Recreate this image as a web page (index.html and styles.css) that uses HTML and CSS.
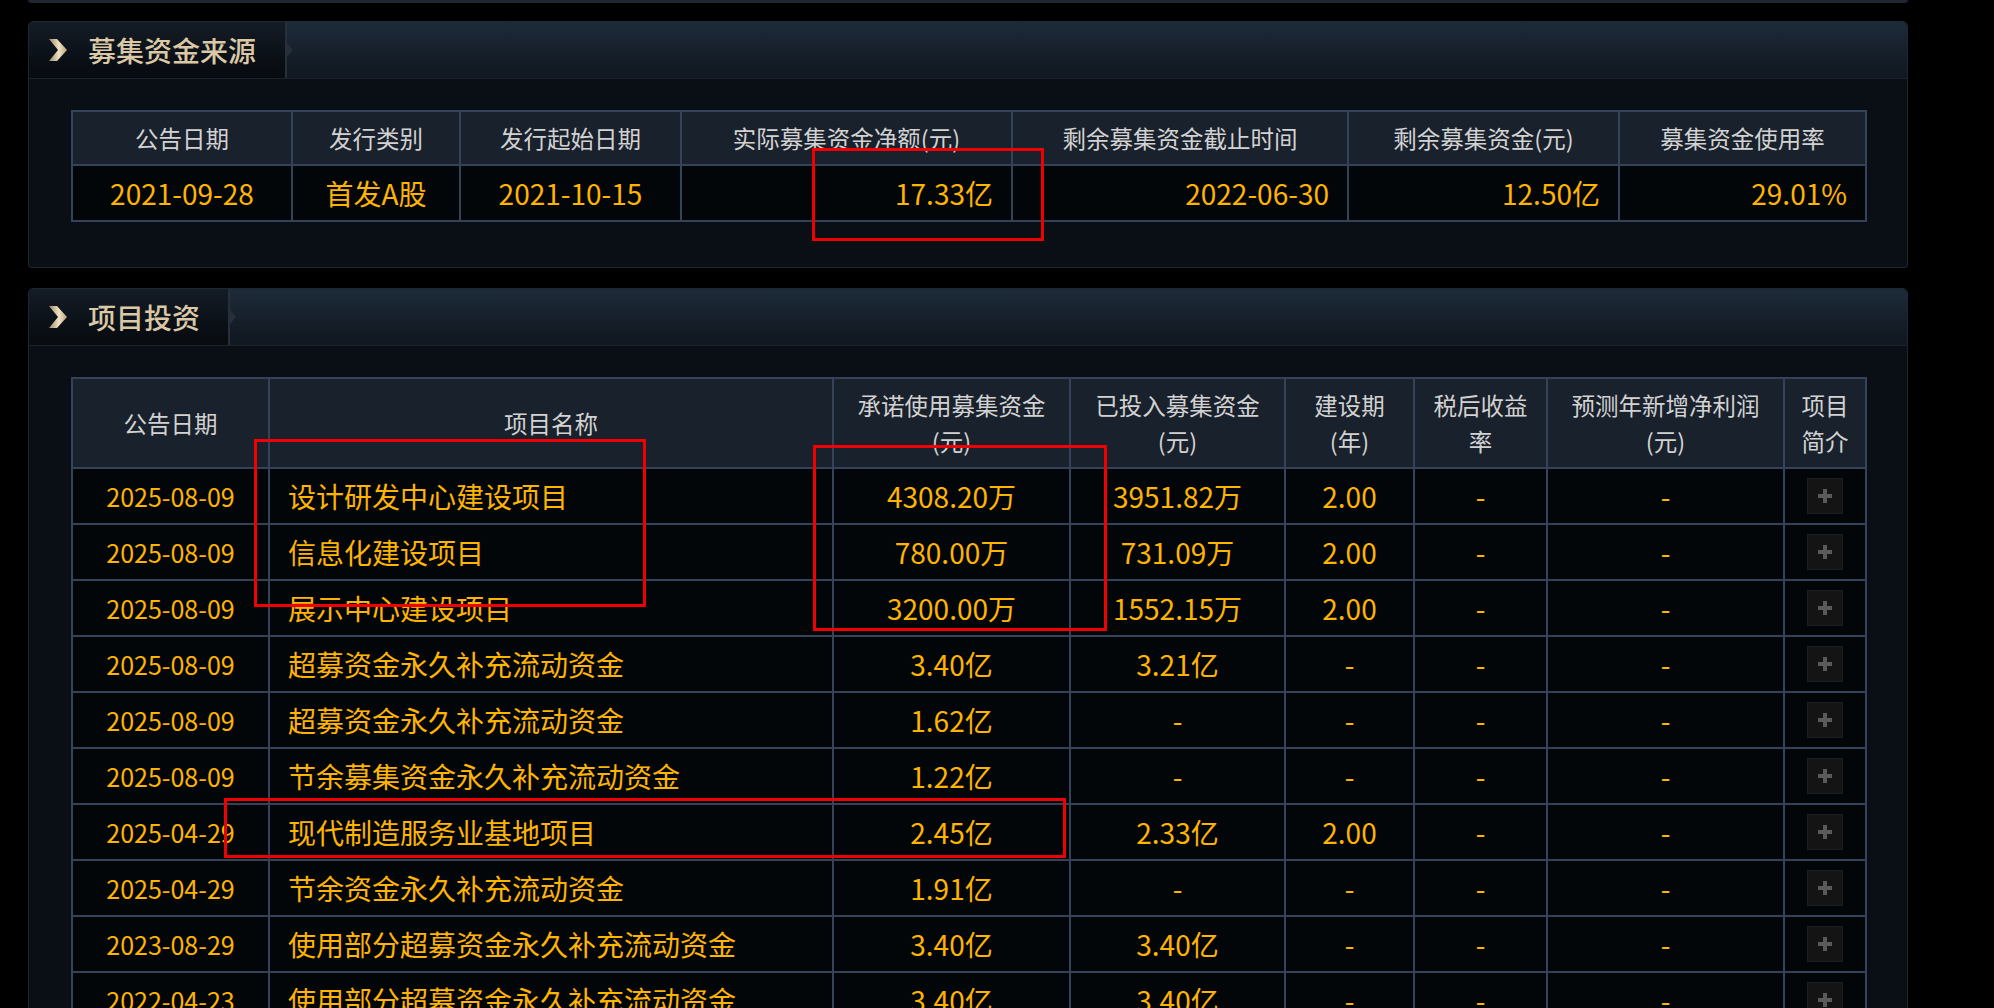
FILE: index.html
```html
<!DOCTYPE html>
<html lang="zh-CN">
<head>
<meta charset="utf-8">
<title>募集资金</title>
<link rel="stylesheet" href="styles.css">
</head>
<body>
<div class="page">
  <div class="prev-edge"></div>

  <section class="panel">
    <header class="panel-head">
      <div class="tab tab-wide">
        <svg class="chev" width="20" height="22" viewBox="0 0 20 22"><defs><linearGradient id="cg1" x1="0" y1="0" x2="1" y2="0"><stop offset="0" stop-color="#9a8766"/><stop offset="0.55" stop-color="#f0e2c4"/><stop offset="1" stop-color="#b8a47f"/></linearGradient></defs><polygon points="1,0 9,0 19,11 9,22 1,22 10,11" fill="url(#cg1)"/></svg>
        <h2 class="title">募集资金来源</h2>
      </div>
    </header>
    <div class="panel-body">
      <table class="grid grid-a">
        <colgroup><col class="a1"><col class="a2"><col class="a3"><col class="a4"><col class="a5"><col class="a6"><col class="a7"></colgroup>
        <thead>
          <tr><th>公告日期</th><th>发行类别</th><th>发行起始日期</th><th>实际募集资金净额(元)</th><th>剩余募集资金截止时间</th><th>剩余募集资金(元)</th><th>募集资金使用率</th></tr>
        </thead>
        <tbody>
          <tr>
            <td class="num c">2021-09-28</td>
            <td class="c">首发A股</td>
            <td class="num c">2021-10-15</td>
            <td class="num r">17.33<span class="u">亿</span></td>
            <td class="num r">2022-06-30</td>
            <td class="num r">12.50<span class="u">亿</span></td>
            <td class="num r">29.01%</td>
          </tr>
        </tbody>
      </table>
    </div>
  </section>

  <section class="panel">
    <header class="panel-head">
      <div class="tab tab-narrow">
        <svg class="chev" width="20" height="22" viewBox="0 0 20 22"><defs><linearGradient id="cg2" x1="0" y1="0" x2="1" y2="0"><stop offset="0" stop-color="#9a8766"/><stop offset="0.55" stop-color="#f0e2c4"/><stop offset="1" stop-color="#b8a47f"/></linearGradient></defs><polygon points="1,0 9,0 19,11 9,22 1,22 10,11" fill="url(#cg2)"/></svg>
        <h2 class="title">项目投资</h2>
      </div>
    </header>
    <div class="panel-body">
      <table class="grid grid-b">
        <colgroup><col class="b1"><col class="b2"><col class="b3"><col class="b4"><col class="b5"><col class="b6"><col class="b7"><col class="b8"></colgroup>
        <thead>
          <tr><th>公告日期</th><th>项目名称</th><th>承诺使用募集资金<br>(元)</th><th>已投入募集资金<br>(元)</th><th>建设期<br>(年)</th><th>税后收益<br>率</th><th>预测年新增净利润<br>(元)</th><th>项目<br>简介</th></tr>
        </thead>
        <tbody>
          <tr><td class="num date c">2025-08-09</td><td class="name">设计研发中心建设项目</td><td class="num c">4308.20<span class="u">万</span></td><td class="num c">3951.82<span class="u">万</span></td><td class="num c">2.00</td><td class="num c">-</td><td class="num c">-</td><td class="c"><span class="plus"><svg width="16" height="16" viewBox="0 0 16 16"><path d="M8 1v14M1 8h14" stroke="#5a5a5a" stroke-width="4"/></svg></span></td></tr>
          <tr><td class="num date c">2025-08-09</td><td class="name">信息化建设项目</td><td class="num c">780.00<span class="u">万</span></td><td class="num c">731.09<span class="u">万</span></td><td class="num c">2.00</td><td class="num c">-</td><td class="num c">-</td><td class="c"><span class="plus"><svg width="16" height="16" viewBox="0 0 16 16"><path d="M8 1v14M1 8h14" stroke="#5a5a5a" stroke-width="4"/></svg></span></td></tr>
          <tr><td class="num date c">2025-08-09</td><td class="name">展示中心建设项目</td><td class="num c">3200.00<span class="u">万</span></td><td class="num c">1552.15<span class="u">万</span></td><td class="num c">2.00</td><td class="num c">-</td><td class="num c">-</td><td class="c"><span class="plus"><svg width="16" height="16" viewBox="0 0 16 16"><path d="M8 1v14M1 8h14" stroke="#5a5a5a" stroke-width="4"/></svg></span></td></tr>
          <tr><td class="num date c">2025-08-09</td><td class="name">超募资金永久补充流动资金</td><td class="num c">3.40<span class="u">亿</span></td><td class="num c">3.21<span class="u">亿</span></td><td class="num c">-</td><td class="num c">-</td><td class="num c">-</td><td class="c"><span class="plus"><svg width="16" height="16" viewBox="0 0 16 16"><path d="M8 1v14M1 8h14" stroke="#5a5a5a" stroke-width="4"/></svg></span></td></tr>
          <tr><td class="num date c">2025-08-09</td><td class="name">超募资金永久补充流动资金</td><td class="num c">1.62<span class="u">亿</span></td><td class="num c">-</td><td class="num c">-</td><td class="num c">-</td><td class="num c">-</td><td class="c"><span class="plus"><svg width="16" height="16" viewBox="0 0 16 16"><path d="M8 1v14M1 8h14" stroke="#5a5a5a" stroke-width="4"/></svg></span></td></tr>
          <tr><td class="num date c">2025-08-09</td><td class="name">节余募集资金永久补充流动资金</td><td class="num c">1.22<span class="u">亿</span></td><td class="num c">-</td><td class="num c">-</td><td class="num c">-</td><td class="num c">-</td><td class="c"><span class="plus"><svg width="16" height="16" viewBox="0 0 16 16"><path d="M8 1v14M1 8h14" stroke="#5a5a5a" stroke-width="4"/></svg></span></td></tr>
          <tr><td class="num date c">2025-04-29</td><td class="name">现代制造服务业基地项目</td><td class="num c">2.45<span class="u">亿</span></td><td class="num c">2.33<span class="u">亿</span></td><td class="num c">2.00</td><td class="num c">-</td><td class="num c">-</td><td class="c"><span class="plus"><svg width="16" height="16" viewBox="0 0 16 16"><path d="M8 1v14M1 8h14" stroke="#5a5a5a" stroke-width="4"/></svg></span></td></tr>
          <tr><td class="num date c">2025-04-29</td><td class="name">节余资金永久补充流动资金</td><td class="num c">1.91<span class="u">亿</span></td><td class="num c">-</td><td class="num c">-</td><td class="num c">-</td><td class="num c">-</td><td class="c"><span class="plus"><svg width="16" height="16" viewBox="0 0 16 16"><path d="M8 1v14M1 8h14" stroke="#5a5a5a" stroke-width="4"/></svg></span></td></tr>
          <tr><td class="num date c">2023-08-29</td><td class="name">使用部分超募资金永久补充流动资金</td><td class="num c">3.40<span class="u">亿</span></td><td class="num c">3.40<span class="u">亿</span></td><td class="num c">-</td><td class="num c">-</td><td class="num c">-</td><td class="c"><span class="plus"><svg width="16" height="16" viewBox="0 0 16 16"><path d="M8 1v14M1 8h14" stroke="#5a5a5a" stroke-width="4"/></svg></span></td></tr>
          <tr><td class="num date c">2022-04-23</td><td class="name">使用部分超募资金永久补充流动资金</td><td class="num c">3.40<span class="u">亿</span></td><td class="num c">3.40<span class="u">亿</span></td><td class="num c">-</td><td class="num c">-</td><td class="num c">-</td><td class="c"><span class="plus"><svg width="16" height="16" viewBox="0 0 16 16"><path d="M8 1v14M1 8h14" stroke="#5a5a5a" stroke-width="4"/></svg></span></td></tr>
        </tbody>
      </table>
    </div>
  </section>

  <div class="mark mark-1"></div>
  <div class="mark mark-2"></div>
  <div class="mark mark-3"></div>
  <div class="mark mark-4"></div>
</div>
</body>
</html>
```

FILE: styles.css
```css
html, body {
  margin: 0;
  padding: 0;
  background: #000;
}

body {
  font-family: "Noto Sans CJK SC", "Noto Sans", sans-serif;
  overflow: hidden;
}

.page {
  position: relative;
  width: 1880px;
  padding-left: 28px;
}

.prev-edge {
  height: 3px;
  background: #1e2630;
  border-radius: 0 0 4px 4px;
  margin-bottom: 18px;
}

.panel {
  background: #0a0e15;
  border: 1px solid #1f2731;
  border-radius: 5px 5px 3px 3px;
  margin-bottom: 20px;
}

.panel-head {
  display: flex;
  height: 56px;
  background: linear-gradient(#1d2b39, #121a24 80%, #111821);
  border-bottom: 1px solid #1a222c;
  border-radius: 5px 5px 0 0;
}

.tab {
  position: relative;
  display: flex;
  align-items: center;
  background: linear-gradient(#141c26, #0a0f15 70%, #080b10);
  border-right: 2px solid #262f3a;
  border-radius: 5px 0 0 0;
}

.tab::after {
  content: "";
  position: absolute;
  right: -8px;
  top: 21px;
  border-top: 7px solid transparent;
  border-bottom: 7px solid transparent;
  border-left: 6px solid #262f3a;
}

.tab-wide { width: 256px; }
.tab-narrow { width: 199px; }

.chev {
  margin-left: 19px;
  flex: none;
}

.title {
  margin: 0 0 0 20px;
  font-size: 28px;
  font-weight: 500;
  color: #dac8a6;
  letter-spacing: 0;
  line-height: 1;
}

.panel-body {
  padding: 31px 42px 45px;
}

.grid {
  width: 100%;
  border-collapse: collapse;
  table-layout: fixed;
}

.grid th,
.grid td {
  border: 2px solid #34435a;
  padding: 0;
}

.grid th {
  background: #19212c;
  color: #d2d2d2;
  font-weight: 400;
  font-size: 23.5px;
  line-height: 36px;
  text-align: center;
}

.grid td {
  background: #030609;
  color: #ffb400;
  font-size: 28px;
  line-height: 1;
}

.grid-a thead tr { height: 54px; }
.grid-a tbody tr { height: 56px; }
.grid-b thead tr { height: 90px; }
.grid-b tbody tr { height: 56px; }

.a1 { width: 220px; }
.a2 { width: 168px; }
.a3 { width: 221px; }
.a4 { width: 331px; }
.a5 { width: 336px; }
.a6 { width: 271px; }
.a7 { width: 247px; }

.b1 { width: 197px; }
.b2 { width: 564px; }
.b3 { width: 237px; }
.b4 { width: 215px; }
.b5 { width: 129px; }
.b6 { width: 133px; }
.b7 { width: 237px; }
.b8 { width: 82px; }

.num {
  font-family: "Noto Sans CJK SC", sans-serif;
  font-size: 31px;
}

.grid td.date {
  font-size: 25px;
}

.num .u {
  font-size: 28px;
}

.c { text-align: center; }
.r { text-align: right; padding-right: 18px !important; }
.name { padding-left: 18px !important; text-align: left; }

.plus {
  display: inline-flex;
  align-items: center;
  justify-content: center;
  width: 34px;
  height: 34px;
  background: #141414;
  border: 1px solid #1e1e1e;
  vertical-align: middle;
}

.mark {
  position: absolute;
  box-sizing: border-box;
  border: 3px solid #f00000;
}

.mark-1 { left: 812px; top: 148px; width: 232px; height: 93px; }
.mark-2 { left: 254px; top: 439px; width: 392px; height: 168px; }
.mark-3 { left: 813px; top: 445px; width: 294px; height: 186px; }
.mark-4 { left: 224px; top: 798px; width: 842px; height: 60px; }
```
